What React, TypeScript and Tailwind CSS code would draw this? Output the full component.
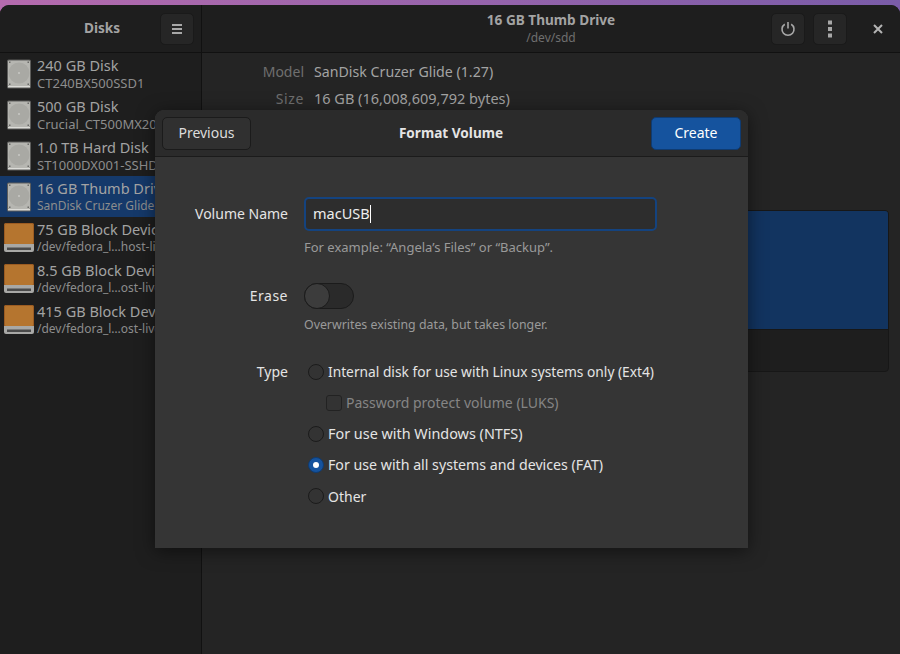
import React from 'react';

const font = { fontFamily: '"Noto Sans", "Open Sans", sans-serif' };

const DiskIcon = () => (
  <svg width="24" height="30" viewBox="0 0 24 30" className="shrink-0">
    <rect x="0" y="0.5" width="24" height="29" rx="1.5" fill="#5d5d5b" />
    <rect x="1" y="1.5" width="22" height="25.5" rx="1" fill="#b6b6b1" />
    <circle cx="12" cy="14" r="10.5" fill="#a9a9a4" />
    <circle cx="12" cy="14" r="1" fill="#c8c8c4" />
    <rect x="2" y="2.5" width="1.5" height="1.5" fill="#6a6a68" />
    <rect x="20.5" y="2.5" width="1.5" height="1.5" fill="#6a6a68" />
    <rect x="2" y="24.5" width="1.5" height="1.5" fill="#6a6a68" />
    <rect x="20.5" y="24.5" width="1.5" height="1.5" fill="#6a6a68" />
    <rect x="1" y="27" width="22" height="1.5" fill="#dcdcd8" />
  </svg>
);

const BlockIcon = () => (
  <svg width="30" height="30" viewBox="0 0 30 30" className="shrink-0">
    <rect x="0" y="0" width="30" height="22" rx="2" fill="#b5752f" />
    <rect x="0.5" y="0.5" width="29" height="21" rx="1.5" fill="none" stroke="#9c5c22" />
    <path d="M0 21h30v6a2 2 0 0 1-2 2H2a2 2 0 0 1-2-2z" fill="#a8a8a6" />
    <rect x="3" y="24.5" width="24" height="2.5" fill="#4a4a4a" />
  </svg>
);

const devices = [
  { title: '240 GB Disk', sub: 'CT240BX500SSD1', kind: 'disk', wide: true },
  { title: '500 GB Disk', sub: 'Crucial_CT500MX20', kind: 'disk', wide: true },
  { title: '1.0 TB Hard Disk', sub: 'ST1000DX001-SSHD', kind: 'disk', wide: true },
  { title: '16 GB Thumb Drive', sub: 'SanDisk Cruzer Glide', kind: 'disk', selected: true },
  { title: '75 GB Block Device', sub: '/dev/fedora_l…host-live', kind: 'block' },
  { title: '8.5 GB Block Device', sub: '/dev/fedora_l…ost-live', kind: 'block' },
  { title: '415 GB Block Device', sub: '/dev/fedora_l…ost-live', kind: 'block' },
];

const HeaderButton = ({ children }: { children: React.ReactNode }) => (
  <div className="w-[34px] h-[32px] rounded-[5px] bg-[#262626] border border-[#1a1a1a] flex items-center justify-center">
    {children}
  </div>
);

const Radio = ({ label, checked, size }: { label: string; checked?: boolean; size: string }) => (
  <div className="h-[31px] flex items-center">
    <div className="w-[24px] flex justify-center">
      {checked ? (
        <div className="w-4 h-4 rounded-full bg-[#15539e] border border-[#0f3b71] flex items-center justify-center">
          <div className="w-[6px] h-[6px] rounded-full bg-white" />
        </div>
      ) : (
        <div className="w-4 h-4 rounded-full bg-[#333333] border border-[#1b1b1b]" />
      )}
    </div>
    <span className={`text-[#e4e4e4] whitespace-nowrap pt-px ${size}`}>{label}</span>
  </div>
);

const FieldLabel = ({ children, className }: { children: React.ReactNode; className: string }) => (
  <div className={`w-[133px] shrink-0 text-right text-[14px] text-[#e4e4e4] whitespace-nowrap ${className}`}>{children}</div>
);

export default function App() {
  return (
    <div style={font} className="relative w-[900px] h-[654px] overflow-hidden bg-gradient-to-r from-[#b56bae] to-[#7a5ca8]">
      <div className="mt-[5px] h-[649px] rounded-t-[9px] bg-[#242424] overflow-hidden flex flex-col">
        {/* header */}
        <div className="h-[48px] shrink-0 flex bg-[#1e1e1e] border-b border-[#111111]">
          <div className="w-[202px] shrink-0 border-r border-[#111111] flex items-center pl-[84px] pr-[7px]">
            <span className="font-bold text-[13.6px] text-[#a3a3a3] flex-1">Disks</span>
            <HeaderButton>
              <svg width="12" height="12" viewBox="0 0 12 12" fill="#a8a8a8">
                <rect x="1" y="1" width="10" height="2" />
                <rect x="1" y="5" width="10" height="2" />
                <rect x="1" y="9" width="10" height="2" />
              </svg>
            </HeaderButton>
          </div>
          <div className="flex-1 flex items-center relative">
            <div className="flex-1 flex flex-col items-center">
              <span className="font-bold text-[13.6px] leading-[18px] text-[#a3a3a3]">16 GB Thumb Drive</span>
              <span className="text-[12px] leading-[18px] text-[#6f6f6f]">/dev/sdd</span>
            </div>
            <div className="absolute right-[5px] top-[8px] flex items-center">
              <HeaderButton>
                <svg width="16" height="16" viewBox="0 0 16 16" fill="none" stroke="#a8a8a8" strokeWidth="1.6">
                  <path d="M8 1v6.5" />
                  <path d="M4.8 3.2a6 6 0 1 0 6.4 0" />
                </svg>
              </HeaderButton>
              <div className="ml-[8px]">
                <HeaderButton>
                  <svg width="6" height="18" viewBox="0 0 6 18" fill="#a8a8a8">
                    <rect x="1" y="0.5" width="4" height="4" />
                    <rect x="1" y="7" width="4" height="4" />
                    <rect x="1" y="13.5" width="4" height="4" />
                  </svg>
                </HeaderButton>
              </div>
              <div className="ml-[14px] w-[34px] h-[32px] flex items-center justify-center">
                <svg width="10" height="10" viewBox="0 0 10 10" stroke="#b4b4b4" strokeWidth="2">
                  <path d="M1 1l8 8M9 1l-8 8" />
                </svg>
              </div>
            </div>
          </div>
        </div>

        <div className="flex-1 flex min-h-0">
          {/* sidebar */}
          <div className="w-[202px] shrink-0 bg-[#1e1e1e] border-r border-[#111111] overflow-hidden">
            {devices.map((d) => (
              <div key={d.title} className={`h-[41px] flex items-center whitespace-nowrap ${d.selected ? 'bg-[#15396a]' : ''} ${d.kind === 'disk' ? 'pl-[7px] gap-[6px]' : 'pl-[4px] gap-[3px]'}`}>
                {d.kind === 'disk' ? <DiskIcon /> : <BlockIcon />}
                <div className="flex flex-col pb-[1px]">
                  <span className="text-[14.5px] leading-[20px] text-[#a3a3a3]">{d.title}</span>
                  <span className={`leading-[16px] text-[#8d8d8d] ${d.wide ? 'text-[13px]' : 'text-[12px]'}`}>{d.sub}</span>
                </div>
              </div>
            ))}
          </div>

          {/* main */}
          <div className="flex-1 bg-[#242424] pr-[11px]">
            <div className="mt-[5px] grid grid-cols-[102px_1fr] gap-x-[10px] leading-[27px]">
              <span className="text-right text-[14px] text-[#6f6f6f]">Model</span>
              <span className="text-[14.2px] text-[#a3a3a3]">SanDisk Cruzer Glide (1.27)</span>
              <span className="text-right text-[14px] tracking-[0.6px] text-[#6f6f6f]">Size</span>
              <span className="text-[14.5px] text-[#a3a3a3]">16 GB (16,008,609,792 bytes)</span>
            </div>
            <div className="mt-[98px] h-[162px] rounded-[4px] border border-[#171717] bg-[#1e1e1e] overflow-hidden">
              <div className="h-[119px] bg-[#123460] border-b border-[#171717]" />
            </div>
          </div>
        </div>
      </div>

      {/* dialog */}
      <div className="absolute left-[155px] top-[110px] w-[593px] h-[438px] rounded-t-[9px] bg-[#353535] shadow-[0_3px_18px_rgba(0,0,0,0.5)] overflow-hidden flex flex-col">
        <div className="h-[47px] shrink-0 bg-[#2b2b2b] border-b border-[#1b1b1b] flex items-center justify-between px-[7px]">
          <div className="w-[89px] h-[33px] pb-[2px] rounded-[5px] bg-[#303030] border border-[#1b1b1b] flex items-center justify-center text-[14px] text-[#dcdcdc]">Previous</div>
          <span className="font-bold text-[13.6px] text-[#e4e4e4]">Format Volume</span>
          <div className="w-[90px] h-[33px] pb-[2px] rounded-[5px] bg-[#15539e] border border-[#0f3b71] flex items-center justify-center text-[14px] text-white">Create</div>
        </div>
        <div className="pt-[40px] flex flex-col">
          <div className="flex gap-[16px]">
            <FieldLabel className="leading-[33px]">Volume Name</FieldLabel>
            <div>
              <div className="h-[34px] w-[353px] rounded-[5px] bg-[#2d2d2d] border-2 border-[#14437f] flex items-center pl-[7px] text-[14.5px] text-[#eeeeee]">
                <span>macUSB</span>
                <span className="w-px h-[18px] bg-white" />
              </div>
              <p className="mt-[5px] text-[13px] leading-[22px] text-[#9a9a9a]">For example: “Angela’s Files” or “Backup”.</p>
            </div>
          </div>

          <div className="mt-[25px] flex gap-[16px]">
            <FieldLabel className="leading-[26px] tracking-[0.5px]">Erase</FieldLabel>
            <div>
              <div className="w-[50px] h-[26px] rounded-full bg-[#2a2a2a] border border-[#1b1b1b]">
                <div className="w-[26px] h-[26px] -mt-px -ml-px rounded-full bg-[#3c3c3c] border border-[#1b1b1b]" />
              </div>
              <p className="mt-[5px] text-[12.35px] leading-[22px] text-[#9a9a9a]">Overwrites existing data, but takes longer.</p>
            </div>
          </div>

          <div className="mt-[20px] flex gap-[16px]">
            <FieldLabel className="leading-[31px]">Type</FieldLabel>
            <div>
              <Radio size="text-[13.75px]" label="Internal disk for use with Linux systems only (Ext4)" />
              <div className="h-[31px] flex items-center pl-[22px] gap-[4px]">
                <div className="w-4 h-4 rounded-[3px] bg-[#333333] border border-[#222222]" />
                <span className="text-[14px] text-[#858585]">Password protect volume (LUKS)</span>
              </div>
              <Radio size="text-[14.4px]" label="For use with Windows (NTFS)" />
              <Radio size="text-[14.2px]" label="For use with all systems and devices (FAT)" checked />
              <Radio size="text-[14px]" label="Other" />
            </div>
          </div>
        </div>
      </div>
    </div>
  );
}
